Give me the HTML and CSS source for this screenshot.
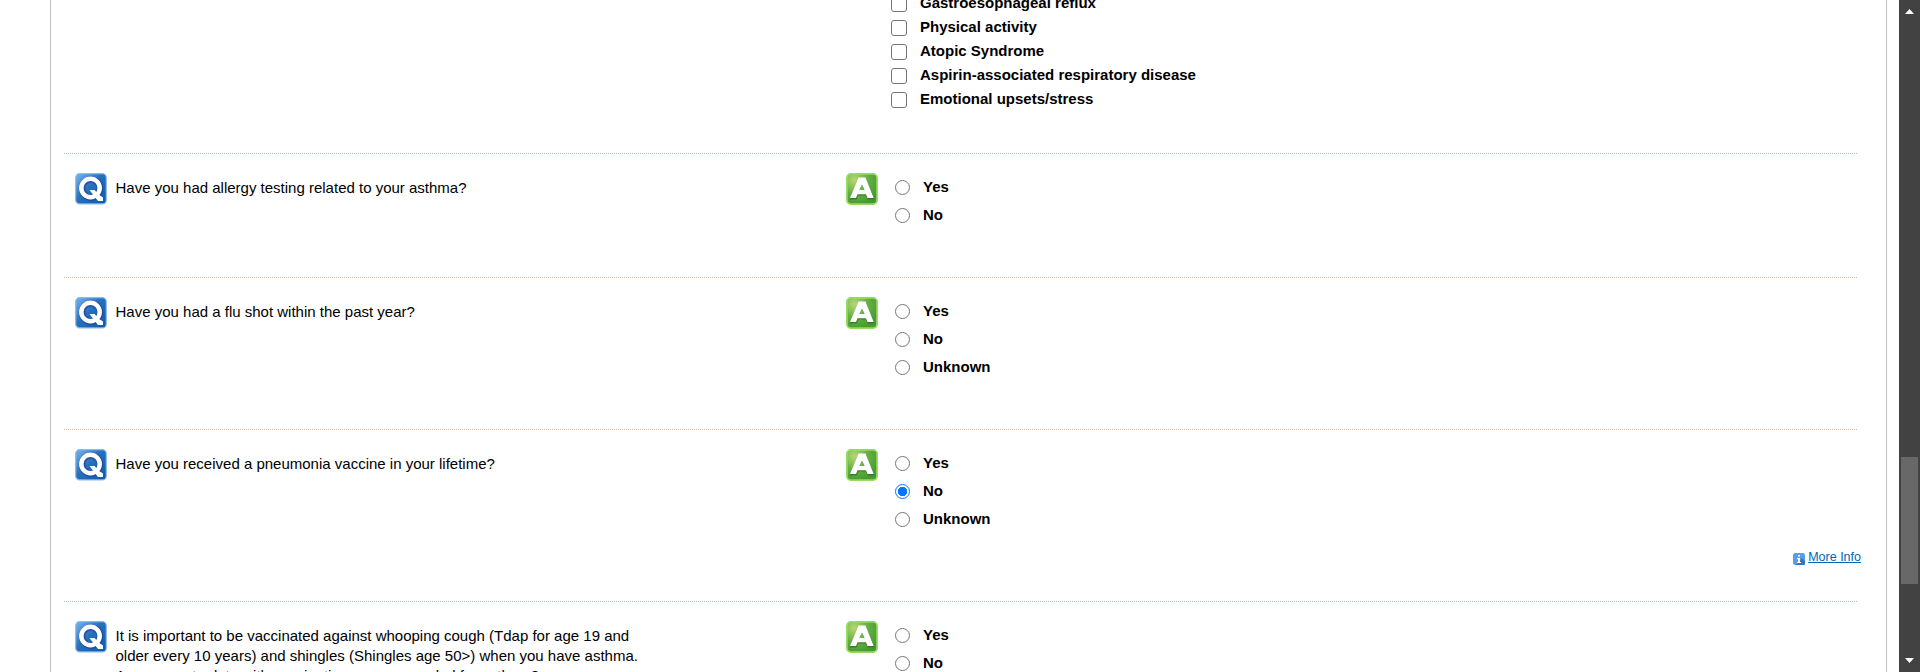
FILE: index.html
```html
<!DOCTYPE html>
<html lang="en">
<head>
<meta charset="utf-8">
<title>Asthma questionnaire</title>
<link rel="stylesheet" href="styles.css">
</head>
<body>
<svg class="defs" aria-hidden="true">
  <defs>
    <linearGradient id="blue" x1="0" y1="0" x2="1" y2="1"><stop offset="0" stop-color="#78b4ea"/><stop offset=".45" stop-color="#2670bd"/><stop offset="1" stop-color="#0b5cae"/></linearGradient>
    <radialGradient id="green" cx=".25" cy=".2" r=".9"><stop offset="0" stop-color="#b5d873"/><stop offset=".5" stop-color="#65b043"/><stop offset="1" stop-color="#43982e"/></radialGradient>
    <symbol id="q" viewBox="0 0 32 32">
      <rect x=".7" y=".7" width="30.6" height="30.2" rx="4" fill="url(#blue)" stroke="#8abbe8" stroke-width="1.2"/>
      <circle cx="16" cy="15.500" r="9" fill="none" stroke="#273f91" stroke-width="6.500" opacity=".7"/>
      <circle cx="15.500" cy="15" r="9.200" fill="none" stroke="#fff" stroke-width="4.500"/>
      <path d="M14.500 17h5l4 4.500 4.500 3v3.500h-5z" fill="#fff"/>
    </symbol>
    <symbol id="a" viewBox="0 0 32 32">
      <rect x=".9" y=".9" width="30.2" height="30.2" rx="4" fill="url(#green)" stroke="#94dc62" stroke-width="1.8"/>
      <path d="M12.500 5.500h7.500l8.500 21h-7l-1.400-4h-8l-1.500 4h-7zM16 12l-2.700 6h5.400z" fill="#286b25" opacity=".65" fill-rule="evenodd"/>
      <path d="M12.500 4.500h7l8.200 20.500h-6.200l-1.500-3.800h-8.500l-1.500 3.800h-6zM16 11.500l-2.600 5.500h5.200z" fill="#fff" fill-rule="evenodd"/>
    </symbol>
  </defs>
</svg>
<div class="viewport">
  <main class="page">
    <section class="row row-triggers">
      <div class="checks">
        <label class="check"><input type="checkbox"><span>Gastroesophageal reflux</span></label>
        <label class="check"><input type="checkbox"><span>Physical activity</span></label>
        <label class="check"><input type="checkbox"><span>Atopic Syndrome</span></label>
        <label class="check"><input type="checkbox"><span>Aspirin-associated respiratory disease</span></label>
        <label class="check"><input type="checkbox"><span>Emotional upsets/stress</span></label>
      </div>
    </section>
    <section class="row row-allergy">
      <svg class="icon"><use href="#q"/></svg>
      <p class="question">Have you had allergy testing related to your asthma?</p>
      <svg class="icon"><use href="#a"/></svg>
      <div class="answers">
        <label class="answer"><input type="radio" name="r1"><span>Yes</span></label>
        <label class="answer"><input type="radio" name="r1"><span>No</span></label>
      </div>
    </section>
    <section class="row row-flu">
      <svg class="icon"><use href="#q"/></svg>
      <p class="question">Have you had a flu shot within the past year?</p>
      <svg class="icon"><use href="#a"/></svg>
      <div class="answers">
        <label class="answer"><input type="radio" name="r2"><span>Yes</span></label>
        <label class="answer"><input type="radio" name="r2"><span>No</span></label>
        <label class="answer"><input type="radio" name="r2"><span>Unknown</span></label>
      </div>
    </section>
    <section class="row row-pneumonia">
      <svg class="icon"><use href="#q"/></svg>
      <p class="question">Have you received a pneumonia vaccine in your lifetime?</p>
      <svg class="icon"><use href="#a"/></svg>
      <div class="answers">
        <label class="answer"><input type="radio" name="r3"><span>Yes</span></label>
        <label class="answer"><input type="radio" name="r3" checked><span>No</span></label>
        <label class="answer"><input type="radio" name="r3"><span>Unknown</span></label>
      </div>
      <div class="more">
        <svg class="info" viewBox="0 0 12 12"><rect width="12" height="12" rx="2.500" fill="#5a9cec"/><path d="M3 12l6-7 3 3v2.500a1.500 1.500 0 0 1-1.500 1.500z" fill="#2f78bd"/><path d="M5 2h2v1.500H5zM4 5h3v4h1v1H4V9h1V6H4z" fill="#fff"/></svg>
        <a href="#">More Info</a>
      </div>
    </section>
    <section class="row row-whooping">
      <svg class="icon"><use href="#q"/></svg>
      <p class="question">It is important to be vaccinated against whooping cough (Tdap for age 19 and older every 10 years) and shingles (Shingles age 50&gt;) when you have asthma. Are you up to date with vaccinations recommended for asthma?</p>
      <svg class="icon"><use href="#a"/></svg>
      <div class="answers">
        <label class="answer"><input type="radio" name="r4"><span>Yes</span></label>
        <label class="answer"><input type="radio" name="r4"><span>No</span></label>
      </div>
    </section>
  </main>
  <div class="scrollbar">
    <svg class="arrow" viewBox="0 0 9 5"><path d="M4.500 0L9 5H0z" fill="#fff"/></svg>
    <div class="thumb"></div>
    <svg class="arrow" viewBox="0 0 9 5"><path d="M0 0h9L4.500 5z" fill="#fff"/></svg>
  </div>
</div>
</body>
</html>
```
FILE: styles.css
```css
* { box-sizing: border-box; }
body { margin: 0; background: #fff; color: #000; font: 15px/20px "Liberation Sans", Arial, sans-serif; overflow: hidden; }
.defs { position: absolute; width: 0; height: 0; }
.viewport { display: flex; justify-content: space-between; height: 672px; padding-left: 50px; overflow: hidden; }
.page { width: 1837px; height: 672px; padding: 0 28px 0 13px; border: solid #c0c0c0; border-width: 0 1px; overflow: hidden; }
.row { display: grid; grid-template-columns: 32px 739px 32px 1fr; align-items: start; align-content: start; width: 1793px; padding: 19px 0 0 11px; border-top: 1px dotted #a5c8e4; }
.row-triggers { display: flex; height: 153px; padding: 0 0 0 827px; border: 0; }
.row-allergy { height: 124px; }
.row-flu { height: 152px; }
.row-pneumonia { height: 172px; }
.icon { width: 32px; height: 32px; }
.question { width: 540px; margin: 5px 0 0 8.500px; }
.checks { display: flex; flex-direction: column; margin-top: -8px; }
.check { display: flex; align-items: center; gap: 13px; height: 24px; font-weight: bold; }
.answers { padding: 0 0 0 17px; }
.answer { display: flex; align-items: center; gap: 13px; height: 28px; font-weight: bold; }
.check span { margin-top: -2px; }
input { appearance: none; flex: none; width: 15px; height: 15px; margin: 0; border: 1px solid #767676; background: #fff; }
input[type="checkbox"] { width: 16px; height: 16px; border-radius: 3px; }
input[type="radio"] { border-radius: 50%; }
input[type="radio"]:checked { border-color: #0075ff; background: radial-gradient(circle, #0075ff 4.400px, #fff 5px); }
.more { grid-column: 1 / -1; display: flex; justify-content: flex-end; align-items: center; gap: 3px; margin: 16px -4px 0 0; font-size: 12.500px; line-height: 16px; }
.more a { color: #0066b3; }
.info { width: 12px; height: 12px; margin-top: 3px; }
.scrollbar { display: flex; flex-direction: column; align-items: center; width: 21px; height: 672px; padding: 9px 0; background: #424242; }
.thumb { width: 17px; height: 127px; margin: 443px 0 74px; background: #686868; }
.arrow { width: 9px; height: 5px; }
```
